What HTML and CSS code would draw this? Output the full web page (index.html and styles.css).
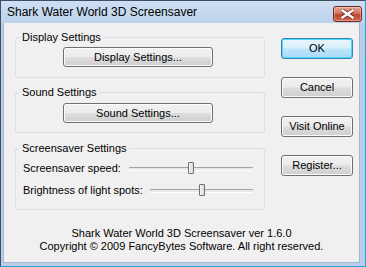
FILE: index.html
```html
<!DOCTYPE html>
<html>
<head>
<meta charset="utf-8">
<title>Shark Water World 3D Screensaver</title>
<link rel="stylesheet" href="styles.css">
</head>
<body>
<div class="window">
  <div class="titlebar">
    <span class="title">Shark Water World 3D Screensaver</span>
    <span class="close"><svg width="13" height="10" viewBox="0 0 13 10"><path d="M1.5 1.5 L11.5 8.5 M11.5 1.5 L1.5 8.5" stroke="#6b2a22" stroke-width="4" stroke-linecap="square"/><path d="M1.5 1.5 L11.5 8.5 M11.5 1.5 L1.5 8.5" stroke="#fff" stroke-width="2.4" stroke-linecap="square"/></svg></span>
  </div>
  <div class="client">
    <div class="main">
      <div class="groups">
        <fieldset class="group g-display">
          <legend>Display Settings</legend>
          <button class="btn wide">Display Settings...</button>
        </fieldset>
        <fieldset class="group g-sound">
          <legend>Sound Settings</legend>
          <button class="btn wide">Sound Settings...</button>
        </fieldset>
        <fieldset class="group g-saver">
          <legend>Screensaver Settings</legend>
          <div class="row">
            <span class="label">Screensaver speed:</span>
            <div class="slider s-speed"><span class="thumb" style="left:59px"></span></div>
          </div>
          <div class="row">
            <span class="label">Brightness of light spots:</span>
            <div class="slider s-light"><span class="thumb" style="left:49px"></span></div>
          </div>
        </fieldset>
      </div>
      <div class="side">
        <button class="btn default">OK</button>
        <button class="btn">Cancel</button>
        <button class="btn">Visit Online</button>
        <button class="btn">Register...</button>
      </div>
    </div>
    <div class="about">
      <p>Shark Water World 3D Screensaver ver 1.6.0</p>
      <p>Copyright © 2009 FancyBytes Software. All right reserved.</p>
    </div>
  </div>
</div>
</body>
</html>
```

FILE: styles.css
```css
* { margin:0; padding:0; box-sizing:border-box;}
body{ font: normal 11px/13px "Liberation Sans", Arial, sans-serif; color:#000; background:#fff;}

.window{ width:366px; height:267px; border:1px solid #3d4f66; border-right-color:#2b9ed6; border-bottom-color:#2b9ed6; background:#b7cfea; padding:0 5px 3px 2px; display:flex; flex-direction:column;}
.titlebar{ height:22px; margin:0 -5px 0 -2px; padding:0 3px 0 6px; display:flex; align-items:center; justify-content:space-between; background:linear-gradient(#cfdff2, #bcd2eb);}
.title{ font-size:12px; color:#000; padding-top:1px;}
.close{ width:29px; height:16px; margin-top:3px; margin-right:0; border:1px solid #6b2a22; border-radius:3px; background:linear-gradient(#e7a596, #d5735f 45%, #c0442d 55%, #d2654c); display:flex; align-items:center; justify-content:center; box-shadow:inset 0 0 0 1px rgba(255,255,255,.35);}
.close svg{ display:block;}

.client{ flex:1; background:#f0f0f0; border:1px solid #a7b6c8; border-top:none; padding:8px 0 0 11px;}
.main{ display:flex; gap:16px;}
.groups{ width:250px;}
.group{ border:1px solid #d5dfe5; border-radius:3px; margin:0; padding:0; min-width:0;}
.group legend{ margin-left:4px; padding:0 2px; line-height:13px;}
.g-display{ padding-bottom:10px;}
.g-sound{ margin-top:8px; padding-bottom:9px;}
.g-saver{ margin-top:9px; padding:4px 0 10px 0;}

.btn{ display:block; font:inherit; color:#000; height:21px; width:72px; border:1px solid #707070; border-radius:3px; background:linear-gradient(#f2f2f2, #ebebeb 48%, #dddddd 52%, #cfcfcf); box-shadow:inset 0 0 0 1px #fcfcfc; text-align:center; line-height:17px;}
.btn.wide{ width:150px; height:20px; margin:3px auto 0 47px; line-height:16px;}
.g-sound .btn.wide{ margin-top:4px;}
.btn.default{ border-color:#3c7fb1; box-shadow:inset 0 0 0 1px #48dcfb; background:linear-gradient(#eaf6fd, #d9f0fc 48%, #bee6fd 52%, #a7d9f5);}

.side{ display:flex; flex-direction:column; gap:18px; padding-top:7px;}

.row{ height:18px; padding:0 11px 0 7px; display:flex; align-items:center; justify-content:space-between;}
.row + .row{ margin-top:4px;}
.slider{ position:relative; height:18px; border:none;}
.slider::before{ content:""; position:absolute; left:0; right:0; top:8px; height:2px; border-top:1px solid #a5a5a5; border-bottom:1px solid #fff; background:#e7eaea;}
.s-speed{ width:124px;}
.s-light{ width:103px;}
.thumb{ position:absolute; top:3px; width:6px; height:12px; border:1px solid #707070; border-radius:1px; background:linear-gradient(90deg, #f4f4f4, #dcdcdc);}

.about{ margin-top:17px; text-align:center; margin-left:-11px;}
```
